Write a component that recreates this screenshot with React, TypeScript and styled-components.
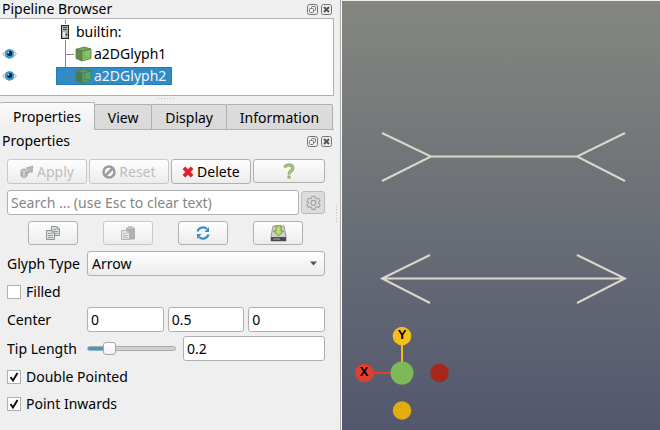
import React, { useState } from "react";
import styled, { createGlobalStyle, css } from "styled-components";

const GlobalStyle = createGlobalStyle`
  * { box-sizing: border-box; }
  body {
    margin: 0;
    background: #efefef;
    color: #000;
    font: 14px/18px "Noto Sans", "Open Sans", sans-serif;
  }
  button, input, select { font: inherit; color: inherit; margin: 0; }
`;

const line = "#b0b0b0";

const Window = styled.div`
  display: grid;
  grid-template-columns: minmax(0, 57fr) minmax(0, 53fr);
  min-height: 100vh;
`;

const Side = styled.div`
  display: grid;
  grid-template-columns: minmax(0, 1fr) 7px;
  border-right: 1px solid #fff;
`;

const Dock = styled.div`
  display: flex;
  flex-direction: column;
  min-width: 0;
`;

const TitleBar = styled.header`
  display: flex;
  align-items: center;
  height: 18px;
  padding: 0 2px;
  gap: 3px;
`;

const Title = styled.h2`
  flex: 1;
  margin: 0;
  font-size: 14px;
  font-weight: 400;
`;

const TitleButton = styled.button`
  display: flex;
  padding: 0;
  border: 0;
  background: none;
`;

const Tree = styled.ul`
  margin: 0;
  padding: 2px 0 8px;
  list-style: none;
  background: #fff;
  border: 1px solid ${line};
  border-left: 0;
`;

const TreeRow = styled.li`
  display: flex;
  align-items: center;
  height: 22px;
`;

const EyeCell = styled.button`
  display: flex;
  width: 56px;
  padding: 0 0 0 2px;
  border: 0;
  background: none;
`;

const TreeItem = styled.span<{ $selected?: boolean }>`
  display: flex;
  align-items: center;
  height: 18px;
  padding-right: 6px;
  ${(p) =>
    p.$selected &&
    css`
      color: #eef4f8;
      background: #308cc6;
      box-shadow: inset 0 0 0 1px #2a7ab0;
    `}
`;

const NodeName = styled.span`
  margin-left: 2px;
`;

const Grip = styled.div<{ $vertical?: boolean }>`
  align-self: center;
  width: ${(p) => (p.$vertical ? "2px" : "18px")};
  height: ${(p) => (p.$vertical ? "18px" : "2px")};
  margin: ${(p) => (p.$vertical ? "0 0 0 2px" : "2px 0")};
  background: repeating-linear-gradient(
      ${(p) => (p.$vertical ? "to bottom" : "to right")},
      #bdbdbd 0 1px,
      transparent 1px 3px
    )
    0 0 / ${(p) => (p.$vertical ? "1px 100%" : "100% 1px")} no-repeat;
`;

const SplitEdge = styled.div`
  display: grid;
  border-right: 1px solid #a9a9a9;
`;

const Tabs = styled.div`
  display: flex;
  align-items: flex-end;
  height: 28px;
  margin-bottom: 2px;
  padding-right: 1px;
  box-shadow: inset 0 -1px #b4b4b4;
`;

const Tab = styled.button<{ $active?: boolean }>`
  flex: 1 1 auto;
  height: ${(p) => (p.$active ? "28px" : "26px")};
  padding: 2px 12px 0;
  border: 1px solid ${line};
  border-left-width: ${(p) => (p.$active ? "0" : "1px")};
  border-bottom-color: ${(p) => (p.$active ? "#efefef" : "#b4b4b4")};
  margin-left: ${(p) => (p.$active ? "0" : "-1px")};
  border-radius: 2px 2px 0 0;
  background: ${(p) => (p.$active ? "linear-gradient(#fafafa, #efefef)" : "linear-gradient(#dedede, #d9d9d9)")};
`;

const Form = styled.form`
  display: flex;
  flex-direction: column;
  gap: 6px;
  padding: 9px 9px 15px 7px;
`;

const Fields = styled.div`
  display: flex;
  flex-direction: column;
  gap: 4px;
`;

const ButtonRow = styled.div`
  display: flex;
  align-items: flex-start;
  gap: 2px;
`;

const bevel = css`
  border: 1px solid #b0b0b0;
  border-radius: 3px;
  background: linear-gradient(#fefefe, #ececec);
`;

const PushButton = styled.button<{ $grow?: number }>`
  ${bevel}
  display: flex;
  flex: ${(p) => p.$grow ?? 10} 1 0;
  align-items: center;
  justify-content: center;
  gap: 3px;
  height: ${(p) => (p.$grow ? "24px" : "25px")};
  padding: 0;
  &:disabled { color: #bebebe; border-color: #c8c8c8; }
`;

const ToolRow = styled.div`
  display: flex;
  justify-content: space-between;
  padding: 0 22px 0 21px;
`;

const ToolButton = styled.button`
  ${bevel}
  display: flex;
  align-items: center;
  justify-content: center;
  width: 50px;
  height: 24px;
  padding: 0;
  &:disabled { border-color: #c8c8c8; }
`;

const GearButton = styled.button`
  display: flex;
  align-items: center;
  justify-content: center;
  width: 24px;
  height: 23px;
  margin-top: 1px;
  padding: 0;
  border: 1px solid #bcbcbc;
  border-radius: 3px;
  background: #dcdcdc;
`;

const TextBox = styled.input`
  flex: 1;
  width: 100%;
  min-width: 0;
  height: 25px;
  padding: 0 3px;
  border: 1px solid #b0b0b0;
  border-radius: 3px;
  background: #fff;
  &::placeholder { color: #868686; opacity: 1; }
`;

const FieldRow = styled.div`
  display: grid;
  grid-template-columns: 80px minmax(0, 1fr);
  align-items: center;
  min-height: 25px;
`;

const Vector = styled.div`
  display: grid;
  grid-template-columns: repeat(3, minmax(0, 1fr));
  gap: 4px;
`;

const SliderPair = styled.div`
  display: grid;
  grid-template-columns: 89px minmax(0, 1fr);
  gap: 7px;
  align-items: center;
`;

const Slider = styled.input`
  appearance: none;
  width: 100%;
  height: 14px;
  background: none;
  &::-webkit-slider-runnable-track {
    height: 5px;
    border: 1px solid #acacac;
    border-radius: 3px;
    background: linear-gradient(to right, #3a9ad9 var(--fill), #d0d0d0 var(--fill));
  }
  &::-webkit-slider-thumb {
    appearance: none;
    width: 13px;
    height: 13px;
    margin-top: -5px;
    border: 1px solid #a8a8a8;
    border-radius: 3px;
    background: linear-gradient(#fff, #f2f2f2);
  }
`;

const Overlay = styled.div`
  display: grid;
  align-items: center;
  > * { grid-area: 1 / 1; }
  > svg { pointer-events: none; }
`;

const ComboWrap = styled(Overlay)`
  > svg { justify-self: end; margin-right: 7px; }
`;

const Combo = styled.select`
  ${bevel}
  appearance: none;
  width: 100%;
  height: 25px;
  padding: 0 22px 0 4px;
`;

const CheckLabel = styled.label`
  display: flex;
  align-items: center;
  gap: 5px;
  height: 23px;
`;

const Box = styled.input`
  appearance: none;
  width: 14px;
  height: 14px;
  border: 1px solid #b0b0b0;
  background: #fff;
  & + svg { visibility: hidden; }
  &:checked + svg { visibility: visible; }
`;

const Viewport = styled.main`
  display: grid;
  margin-top: 1px;
  background: linear-gradient(#84877f, #52576e);
`;

const Scene = styled.svg`
  width: 100%;
  height: 100%;
`;

function DockTitle({ text }: { text: string }) {
  return (
    <TitleBar>
      <Title>{text}</Title>
      <TitleButton type="button" aria-label="Float">
        <svg width="11" height="11" viewBox="0 0 11 11" fill="none" stroke="#727272">
          <rect x=".5" y=".5" width="10" height="10" rx="2" />
          <rect x="4.5" y="2.5" width="4" height="4" rx="1" />
          <rect x="2.5" y="4.5" width="4" height="4" rx="1" fill="#efefef" />
        </svg>
      </TitleButton>
      <TitleButton type="button" aria-label="Close">
        <svg width="11" height="11" viewBox="0 0 11 11" fill="none" stroke="#727272">
          <rect x=".5" y=".5" width="10" height="10" rx="2" />
          <path d="M3 3l5 5M8 3l-5 5" stroke="#555" strokeWidth="2" />
        </svg>
      </TitleButton>
    </TitleBar>
  );
}

function Eye() {
  return (
    <svg width="15" height="12" viewBox="0 0 15 12">
      <path d="M.5 6Q7.500-2.500 14.500 6Q7.500 14.500.5 6Z" fill="#f4f4f4" stroke="#a3a3a3" />
      <circle cx="7.500" cy="5.800" r="4.600" fill="#2f9bd6" />
      <circle cx="7.700" cy="5.500" r="2.500" fill="#03192b" />
      <circle cx="6.400" cy="4.500" r="1" fill="#b9e4fb" />
    </svg>
  );
}

function Branch({ last, selected }: { last?: boolean; selected?: boolean }) {
  return (
    <svg width="19" height="22" viewBox="0 0 19 22" overflow="visible">
      <path
        d={last ? "M9.500 0V11.500H18" : "M9.500-2V22M9.500 11.500H18"}
        fill="none"
        stroke={selected ? "#557f9d" : "#8a8a8a"}
      />
    </svg>
  );
}

function Cube({ selected }: { selected?: boolean }) {
  const [left, right, top] = selected ? ["#467c50", "#4fa56a", "#589b68"] : ["#5f8c49", "#86c45e", "#78a85c"];
  return (
    <svg width="17" height="16" viewBox="0 0 17 16">
      <g stroke="#5b7650" strokeWidth=".8" strokeLinejoin="round">
        <path d="M1 3.200L7 5V15L1 12.500Z" fill={left} />
        <path d="M7 5L16 3V12.500L7 15Z" fill={right} />
        <path d="M1 3.200L9.500 1L16 3L7 5Z" fill={top} />
      </g>
      <path d="M9.500 5V11L7 14M9.500 11L15.500 12" fill="none" stroke={selected ? "#438b57" : "#6faa4d"} strokeWidth=".8" />
    </svg>
  );
}

function Server() {
  return (
    <svg width="20" height="22" viewBox="0 0 20 22" overflow="visible">
      <path d="M9.500-1V3M9.500 19V22" stroke="#8a8a8a" />
      <rect x="5.500" y="4.500" width="7" height="13" fill="#b0b0b0" stroke="#222" />
      <path d="M7 6.500H11M7 8.500H11" stroke="#444" />
      <path d="M7 11V16H9V11Z" fill="#ededed" />
      <circle cx="10.500" cy="13.500" r="1" fill="#444" />
    </svg>
  );
}

function PageGlyph({ x, y }: { x: number; y: number }) {
  return (
    <g transform={`translate(${x} ${y})`}>
      <path d="M.5.5H6L8.500 3V9.500H.5Z" fill="#dce0de" stroke="#8d9290" />
      <path d="M6 .5V3H8.500M2 3.500H5M2 5.500H7M2 7.500H7" fill="none" stroke="#9aa09d" />
    </g>
  );
}

function CheckField({ text, initial }: { text: string; initial: boolean }) {
  return (
    <CheckLabel>
      <Overlay>
        <Box type="checkbox" defaultChecked={initial} />
        <svg width="14" height="14" viewBox="0 0 14 14" fill="none" stroke="#111" strokeWidth="2">
          <path d="M3.500 7L6 10.500L10.500 3" />
        </svg>
      </Overlay>
      {text}
    </CheckLabel>
  );
}

function PipelineBrowser() {
  return (
    <section>
      <DockTitle text="Pipeline Browser" />
      <Tree>
        <TreeRow>
          <EyeCell as="span" />
          <TreeItem><Server />builtin:</TreeItem>
        </TreeRow>
        <TreeRow>
          <EyeCell type="button" aria-label="Toggle a2DGlyph1"><Eye /></EyeCell>
          <TreeItem><Branch /><Cube /><NodeName>a2DGlyph1</NodeName></TreeItem>
        </TreeRow>
        <TreeRow>
          <EyeCell type="button" aria-label="Toggle a2DGlyph2"><Eye /></EyeCell>
          <TreeItem $selected><Branch last selected /><Cube selected /><NodeName>a2DGlyph2</NodeName></TreeItem>
        </TreeRow>
      </Tree>
    </section>
  );
}

function PropertiesForm() {
  const [tip, setTip] = useState("0.2");
  const fill = `${Math.round(Number(tip) * 100)}%`;
  return (
    <Form onSubmit={(e) => e.preventDefault()}>
      <ButtonRow>
        <PushButton type="button" disabled>
          <svg width="14" height="14" viewBox="0 0 14 14">
            <path d="M1 5L4 4L7 5V11L4 13L1 11Z" fill="#b5b5b5" stroke="#a2a2a2" />
            <path d="M1 5L4 6.500L7 5M4 6.500V13" fill="none" stroke="#dedede" />
            <path d="M6 3L13 1L12 8L10.500 6.500L7.500 9L6.500 7L9 4.500Z" fill="#b8b8b8" stroke="#a5a5a5" strokeWidth=".7" />
          </svg>
          Apply
        </PushButton>
        <PushButton type="button" disabled>
          <svg width="14" height="14" viewBox="0 0 14 14" fill="none" stroke="#9b9b9b" strokeWidth="2.500">
            <circle cx="7" cy="7" r="5.500" />
            <path d="M3 11L11 3" />
          </svg>
          Reset
        </PushButton>
        <PushButton type="button">
          <svg width="12" height="12" viewBox="0 0 12 12">
            <path d="M3.200.8L6 3.500L8.800.8L11.200 3L8.500 6L11.200 9L8.800 11.200L6 8.500L3.200 11.200L.8 9L3.500 6L.8 3Z" fill="#e51c23" stroke="#b9474b" strokeWidth=".6" />
          </svg>
          Delete
        </PushButton>
        <PushButton type="button" $grow={9} aria-label="Help">
          <svg width="12" height="16" viewBox="0 0 12 16" fill="none">
            <path d="M2 4.500Q2.500 2 6 2T10 5Q10 6.500 8 8T6 11.500" stroke="#7c9a68" strokeWidth="3" />
            <path d="M2 4.500Q2.500 2 6 2T10 5Q10 6.500 8 8T6 11.500" stroke="#9fce7c" strokeWidth="1.600" />
            <circle cx="6" cy="14" r="1.700" fill="#8db870" />
          </svg>
        </PushButton>
      </ButtonRow>
      <ButtonRow>
        <TextBox type="text" aria-label="Search" placeholder="Search ... (use Esc to clear text)" />
        <GearButton type="button" aria-label="Advanced properties">
          <svg width="15" height="15" viewBox="0 0 24 24" fill="none" stroke="#a2a2a2" strokeWidth="1.800" strokeLinejoin="round">
            <path d="M9.500 2H14.500L15.200 5L17.200 6.100L20.100 5.200L22.600 9.500L20.400 11.600V13.400L22.600 15.500L20.100 19.800L17.200 18.900L15.200 20L14.500 23H9.500L8.800 20L6.800 18.900L3.900 19.800L1.400 15.500L3.600 13.400V11.600L1.400 9.500L3.900 5.200L6.800 6.100L8.800 5Z" />
            <circle cx="12" cy="12.500" r="4" />
          </svg>
        </GearButton>
      </ButtonRow>
      <ToolRow>
        <ToolButton type="button" aria-label="Copy">
          <svg width="16" height="15" viewBox="0 0 16 15"><PageGlyph x={6} y={0} /><PageGlyph x={1} y={4} /></svg>
        </ToolButton>
        <ToolButton type="button" aria-label="Paste" disabled>
          <svg width="16" height="15" viewBox="0 0 16 15" opacity=".65">
            <rect x="6" y="1.500" width="9" height="12" rx="1" fill="#8e8e8e" />
            <rect x="8" y="0" width="5" height="3" rx="1" fill="#a5a5a5" />
            <PageGlyph x={1} y={4} />
          </svg>
        </ToolButton>
        <ToolButton type="button" aria-label="Restore defaults">
          <svg width="16" height="16" viewBox="0 0 16 16">
            <path d="M2.500 6.500A5.800 5.800 0 0 1 12 4M13.500 9.500A5.800 5.800 0 0 1 4 12" fill="none" stroke="#3d8fba" strokeWidth="2.200" />
            <path d="M14 2V7H9.500Z" fill="#3d8fba" />
            <path d="M2 14V9H6.500Z" fill="#3d8fba" />
          </svg>
        </ToolButton>
        <ToolButton type="button" aria-label="Save defaults">
          <svg width="17" height="17" viewBox="0 0 17 17">
            <path d="M3 1H14L16 11V16H1V11Z" fill="#cfcfcf" stroke="#888" strokeWidth=".8" />
            <path d="M1 12H16V16H1Z" fill="#4a4a4a" />
            <path d="M3 14H10" stroke="#aaa" />
            <path d="M6 .8H11V6H13.500L8.500 11L3.500 6H6Z" fill="#b9dc70" stroke="#70952f" />
          </svg>
        </ToolButton>
      </ToolRow>
      <Fields>
        <FieldRow>
          <label htmlFor="glyph">Glyph Type</label>
          <ComboWrap>
            <Combo id="glyph" defaultValue="Arrow"><option>Arrow</option></Combo>
            <svg width="9" height="5" viewBox="0 0 9 5"><path d="M1 .5H8L4.500 4.500Z" fill="#555" /></svg>
          </ComboWrap>
        </FieldRow>
        <CheckField text="Filled" initial={false} />
        <FieldRow role="group" aria-labelledby="center">
          <span id="center">Center</span>
          <Vector>
            <TextBox aria-label="Center X" defaultValue="0" />
            <TextBox aria-label="Center Y" defaultValue="0.5" />
            <TextBox aria-label="Center Z" defaultValue="0" />
          </Vector>
        </FieldRow>
        <FieldRow>
          <label htmlFor="tip">Tip Length</label>
          <SliderPair>
            <Slider
              type="range" min="0" max="1" step="0.01" aria-label="Tip Length slider"
              value={tip} onChange={(e) => setTip(e.target.value)}
              style={{ "--fill": fill } as React.CSSProperties}
            />
            <TextBox id="tip" value={tip} onChange={(e) => setTip(e.target.value)} />
          </SliderPair>
        </FieldRow>
        <CheckField text="Double Pointed" initial />
        <CheckField text="Point Inwards" initial />
      </Fields>
    </Form>
  );
}

function RenderView() {
  return (
    <Viewport>
      <Scene viewBox="0 0 318 429" role="img" aria-label="Render view">
        <g fill="none" stroke="#dcd7cb" strokeWidth="2">
          <path d="M40 132L89 155.500L40 180M89 155.500H235M283 132L235 155.500L283 180" />
          <path d="M88 254L40 277.500L88 302M40 277.500H283M235 254L283 277.500L235 302" />
        </g>
        <path d="M60 335V362" stroke="#f3bb1a" strokeWidth="2" />
        <path d="M23 372H50" stroke="#e13d2e" strokeWidth="2" />
        <circle cx="60" cy="335" r="9.300" fill="#f3bf18" />
        <circle cx="22.500" cy="372" r="9.300" fill="#e23f2f" />
        <circle cx="60" cy="372" r="11.500" fill="#7cba57" />
        <circle cx="97.500" cy="372" r="9.300" fill="#a6281c" />
        <circle cx="60" cy="409.500" r="9.300" fill="#e2ae0e" />
        <g fontFamily="Liberation Sans, sans-serif" fontWeight="700" fontSize="13" textAnchor="middle">
          <text x="60" y="338">Y</text>
          <text x="22" y="375">X</text>
        </g>
      </Scene>
    </Viewport>
  );
}

export default function App() {
  return (
    <Window>
      <GlobalStyle />
      <Side>
        <Dock>
          <PipelineBrowser />
          <Grip />
          <Tabs role="tablist">
            <Tab role="tab" aria-selected="true" $active>Properties</Tab>
            <Tab role="tab" aria-selected="false">View</Tab>
            <Tab role="tab" aria-selected="false">Display</Tab>
            <Tab role="tab" aria-selected="false">Information</Tab>
          </Tabs>
          <DockTitle text="Properties" />
          <PropertiesForm />
        </Dock>
        <SplitEdge><Grip $vertical /></SplitEdge>
      </Side>
      <RenderView />
    </Window>
  );
}
